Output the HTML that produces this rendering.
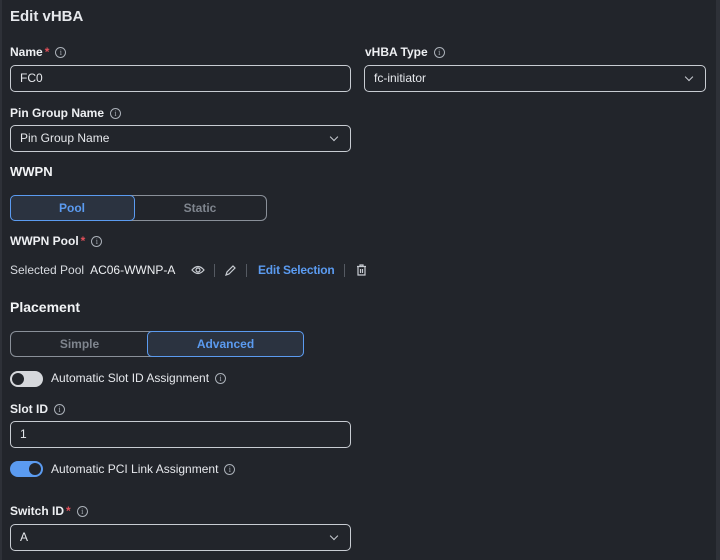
<!DOCTYPE html>
<html><head><meta charset="utf-8"><style>
*{box-sizing:border-box;margin:0;padding:0}
body{width:720px;height:560px;background:#22252b;font-family:"Liberation Sans",sans-serif;color:#e6e8ec;position:relative;overflow:hidden}
.a{position:absolute;white-space:nowrap}
.lbl{font-size:12px;font-weight:bold;color:#eef0f3}
.req{color:#e2505a;margin-left:2px}
.i{display:inline-block;width:11px;height:11px;border:1px solid #aab0b8;border-radius:50%;font-size:8px;line-height:9px;text-align:center;color:#aab0b8;font-weight:normal;vertical-align:middle;margin-left:6px;font-family:"Liberation Serif",serif}
.box{position:absolute;border:1.5px solid #c8ccd2;border-radius:5px;height:27px;font-size:12px;padding-left:9px;line-height:24px;color:#e6e8ec}
.chev{position:absolute;right:13px;top:8px;width:6px;height:6px;border-right:1.5px solid #c8ccd2;border-bottom:1.5px solid #c8ccd2;transform:rotate(45deg)}
.seg{position:absolute;border:1.5px solid #8a9099;border-radius:6px;height:26px}
.sel{position:absolute;top:-1.5px;height:26px;border:1.5px solid #5b9bf0;border-radius:5px;background:#2b3340;color:#5b9bf0;font-weight:bold;font-size:12px;text-align:center;line-height:24px}
.un{position:absolute;top:0;color:#7f858e;font-size:12px;font-weight:bold;text-align:center;line-height:24px}
.h{font-size:13px;font-weight:bold;color:#f2f4f6}
</style></head><body>
<div class="a" style="left:716px;top:0;width:4px;height:560px;background:#2e3138"></div>
<div class="a" style="left:0;top:0;width:2px;height:560px;background:#2e3138"></div>
<div class="a" style="left:10px;top:8px;font-size:15px;font-weight:bold">Edit vHBA</div>

<div class="a lbl" style="left:10px;top:45px">Name<span class="req">*</span><span class="i">i</span></div>
<div class="box" style="left:10px;top:65px;width:341px">FC0</div>
<div class="a lbl" style="left:365px;top:45px">vHBA Type<span class="i">i</span></div>
<div class="box" style="left:364px;top:65px;width:342px">fc-initiator<div class="chev"></div></div>

<div class="a lbl" style="left:10px;top:106px">Pin Group Name<span class="i">i</span></div>
<div class="box" style="left:10px;top:125px;width:341px">Pin Group Name<div class="chev"></div></div>

<div class="a h" style="left:10px;top:164px">WWPN</div>
<div class="seg" style="left:10px;top:195px;width:257px">
<div class="sel" style="left:-1.5px;width:125px">Pool</div>
<div class="un" style="left:124px;width:130px">Static</div></div>

<div class="a lbl" style="left:10px;top:234px">WWPN Pool<span class="req">*</span><span class="i">i</span></div>
<div class="a" style="left:10px;top:263px;font-size:12px;color:#d8dbe0">Selected Pool&nbsp; <span style="color:#eef0f3">AC06-WWNP-A</span></div>
<svg class="a" style="left:191px;top:264px" width="14" height="12" viewBox="0 0 14 12"><path d="M1 6Q7 -1 13 6Q7 13 1 6Z" fill="none" stroke="#c8ccd2" stroke-width="1.2"/><circle cx="7" cy="6" r="2" fill="none" stroke="#c8ccd2" stroke-width="1.2"/></svg>
<div class="a" style="left:214px;top:264px;width:1px;height:13px;background:#555a62"></div>
<svg class="a" style="left:224px;top:264px" width="13" height="13" viewBox="0 0 13 13"><path d="M2 11L3 8L9 2L11 4L5 10Z" fill="none" stroke="#c8ccd2" stroke-width="1.2"/></svg>
<div class="a" style="left:246px;top:264px;width:1px;height:13px;background:#555a62"></div>
<div class="a" style="left:258px;top:263px;font-size:12px;font-weight:bold;color:#5b9bf0;letter-spacing:-0.2px">Edit Selection</div>
<div class="a" style="left:344px;top:264px;width:1px;height:13px;background:#555a62"></div>
<svg class="a" style="left:356px;top:264px" width="11" height="12" viewBox="0 0 11 12"><path d="M1 2.5H10M4 2.5V1H7V2.5M2 2.5V11H9V2.5M4.5 5V9M6.5 5V9" fill="none" stroke="#c8ccd2" stroke-width="1.2"/></svg>

<div class="a h" style="left:10px;top:299px;font-size:14px">Placement</div>
<div class="seg" style="left:10px;top:331px;width:294px">
<div class="un" style="left:0;width:137px">Simple</div>
<div class="sel" style="left:136px;width:157px">Advanced</div></div>

<div class="a" style="left:10px;top:371px;width:33px;height:16px;border-radius:8px;background:#d6d8dc"><div style="position:absolute;left:2px;top:2px;width:12px;height:12px;border-radius:50%;background:#22252b"></div></div>
<div class="a" style="left:51px;top:371px;font-size:12px;color:#e6e8ec">Automatic Slot ID Assignment<span class="i">i</span></div>

<div class="a lbl" style="left:10px;top:402px">Slot ID<span class="i">i</span></div>
<div class="box" style="left:10px;top:421px;width:341px">1</div>

<div class="a" style="left:10px;top:461px;width:33px;height:16px;border-radius:8px;background:#5b9bf0"><div style="position:absolute;right:2px;top:2px;width:12px;height:12px;border-radius:50%;background:#22252b"></div></div>
<div class="a" style="left:51px;top:462px;font-size:12px;color:#e6e8ec">Automatic PCI Link Assignment<span class="i">i</span></div>

<div class="a lbl" style="left:10px;top:504px">Switch ID<span class="req">*</span><span class="i">i</span></div>
<div class="box" style="left:10px;top:524px;width:341px">A<div class="chev"></div></div>
</body></html>
